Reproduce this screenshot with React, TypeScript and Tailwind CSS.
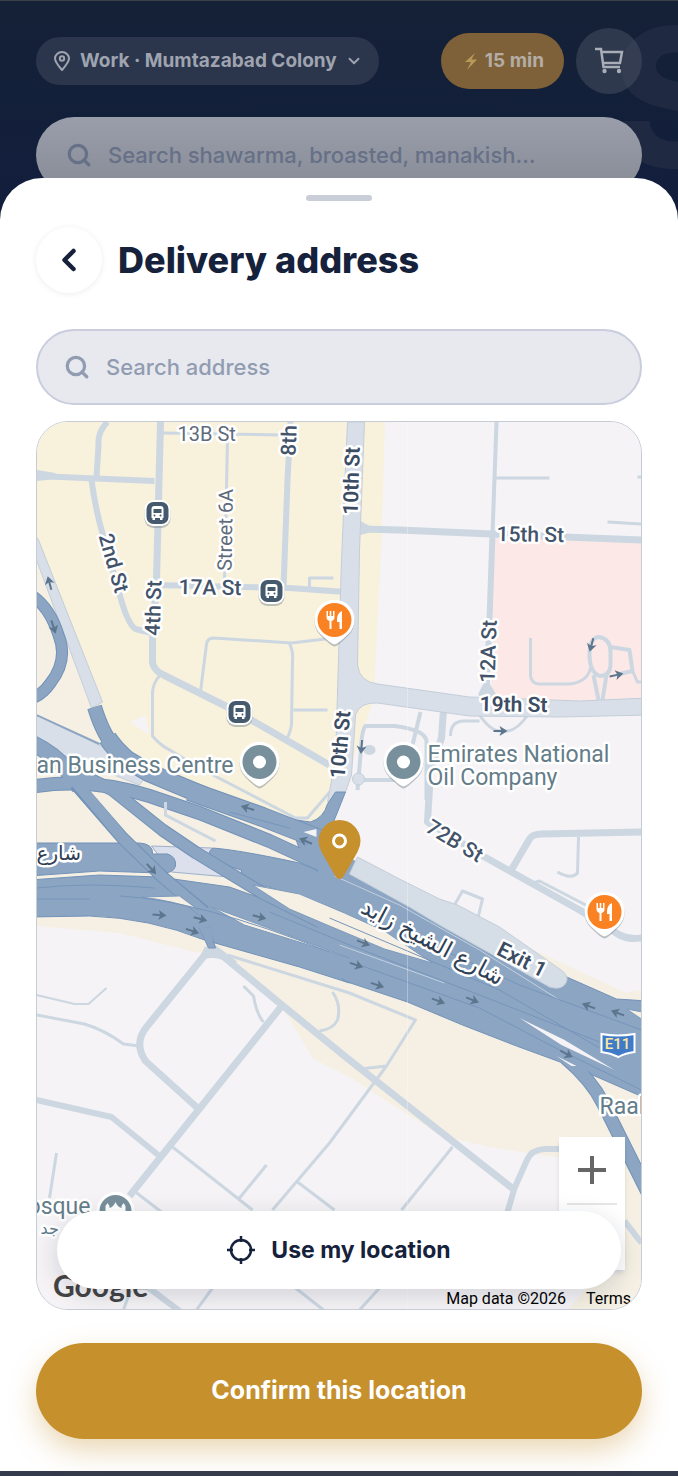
import { ChevronDown, ChevronLeft, Search } from "lucide-react";

const LOCAL_ROADS = [
  { w: 2, d: "M37 995 L75 1004 H89 L107 988" },
  { w: 3, d: "M163 433 L284 435 M228 440 L225 582 M310 590 V578 H334" },
  { w: 3, d: "M201 692 L207 644 Q208 638 214 638 L292 643 L334 638 M289 642 Q294 650 293 660 L292 725 Q290 736 286 740 M294 710 H328" },
  { w: 3, d: "M160 676 Q154 682 153 692 V736 Q160 745 172 751 L200 768 L296 818 H308 L332 790" },
  { w: 3, d: "M496 478 H550 M608 522 L642 524 M638 477 H642" },
  { w: 3, d: "M531 638 V676 Q532 683 539 684 H570 Q588 682 591 668 M633 671 L638 682 H642" },
  { w: 4, d: "M590 654 Q590 637 600 637 Q611 639 611 652 V666 Q610 676 600 676 Q590 672 590 654 M611 647 L630 650 L633 671 L620 674 M594 675 L599 700 M607 675 L603 700" },
  { w: 4, d: "M358 790 L361 755 Q362 730 366 726 L395 726 Q427 730 427 742 V800 M421 712 L413 745 M356 780 L400 780" },
  { w: 3, d: "M451 736 Q451 722 463 721 H480 M478 712 Q490 731 501 731 H508 Q518 730 529 714" },
  { w: 3, d: "M579 837 L578 873 Q572 880 558 872 M530 884 L540 881 L592 908 M455 905 L463 891 L483 899 L478 920" },
  { w: 3, d: "M37 1015 L85 1024 Q105 1030 124 1044 L140 1046 M57 1153 L50 1198" },
  { w: 3, d: "M173 1147 L253 1210 M240 1198 L267 1165 M136 1192 L162 1212 M298 1182 L335 1210" },
  { w: 3, d: "M228 955 L350 993 L416 1020 L387 1066 L361 1069 M387 1066 L330 1143 L273 1210" },
  { w: 3, d: "M333 992 Q342 1005 338 1020 Q334 1029 320 1031 M244 986 L254 996 Q257 1014 264 1022 M453 1147 L402 1210" },
  { w: 3, d: "M213 1288 L197 1310 M131 1290 L124 1310 M296 1288 L324 1310 M380 1288 L360 1310" },
  { w: 4, d: "M497 422 L493 534" },
  { w: 6, d: "M493 534 L490 620 L487 692 M487 684 L482 694 H493 Z" },
  { w: 6, d: "M108 422 Q98 432 99 445 L97 478 M37 476 L155 481 M291 422 L288 480 L284 588 M156 585 L290 588 L346 592" },
  { w: 6, d: "M92 480 Q96 510 104 537 L120 594 Q128 624 136 629 L152 633" },
  { w: 7, d: "M161 422 L157 580 L153 640 V663 Q155 671 164 675 L238 712 L330 765" },
  { w: 7, d: "M362 529 L400 530 L492 534 L642 540" },
  { w: 7, d: "M444 710 L442 738 L431 770 L428 822 L480 854 L512 872 L580 910 L620 935 Q630 940 642 938" },
  { w: 7, d: "M510 873 L530 839 Q533 834 542 834 L642 832" },
  { w: 7, d: "M207 953 L147 1027 Q134 1043 146 1061 L198 1108 M283 1005 L130 1196 M216 950 L280 1003 L350 1060 L515 1190" },
  { w: 6, d: "M37 1100 L112 1117 L160 1156 M508 1212 L515 1188 L528 1159 Q532 1150 545 1149 H562 M625 1221 L642 1243 M148 1287 L180 1311" },
];

const HIGHWAYS = [
  { w: 11, d: "M30 594 Q50 606 59 635 Q69 660 51 683 Q42 696 30 699" },
  { w: 14, d: "M95 707 Q104 736 116 748" },
  { w: 18, d: "M108 738 Q116 750 128 760 L150 773 L205 796" },
  { w: 16, d: "M30 742 Q60 756 72 777 L80 787" },
  { w: 19, d: "M190 791 L263 817 L330 843" },
  { w: 12, d: "M60 764 L113 790 L163 830 L197 853 L263 893 L347 935" },
  { w: 13, d: "M30 787 Q90 777 150 796 L200 813 L270 841 L350 878" },
  { w: 13, d: "M566 1058 Q592 1080 604 1104 L648 1192" },
];

const ARROWS = [
  [248, 808, 197],
  [306, 841, 203],
  [152, 869, 48],
  [160, 915, 5],
  [201, 919, 14],
  [193, 931, 18],
  [260, 917, 14],
  [364, 943, 22],
  [357, 965, 18],
  [378, 985, 18],
  [439, 1001, 20],
  [473, 1000, 22],
  [567, 1054, 28],
  [589, 1006, 200],
  [618, 1013, 200],
  [50, 583, 255],
  [54, 627, 72],
  [501, 731, 0],
  [617, 675, -12],
  [592, 645, 105],
  [362, 747, 95],
];

const STREETS = [
  { t: "15th St", x: 497, y: 541, r: 1 },
  { t: "17A St", x: 179, y: 594, r: 1 },
  { t: "2nd St", x: 99, y: 536, r: 74 },
  { t: "4th St", x: 160, y: 636, r: -88 },
  { t: "8th", x: 296, y: 456, r: -88 },
  { t: "12A St", x: 495, y: 683, r: -88 },
  { t: "72B St", x: 425, y: 831, r: 31 },
];

const MAJOR_STREETS = [
  { t: "10th St", x: 358, y: 515, r: -88 },
  { t: "10th St", x: 345, y: 779, r: -85 },
  { t: "19th St", x: 480, y: 711, r: 1 },
  { t: "Exit 1", x: 496, y: 954, r: 27 },
];

function Arrow({ x, y, r }: { x: number; y: number; r: number }) {
  return (
    <g transform={`translate(${x} ${y}) rotate(${r})`}>
      <path d="M-7 0 H3" stroke="#5d768e" strokeWidth="2" />
      <path d="M7 0 L-1 -5 L1 0 L-1 5 Z" fill="#5d768e" />
    </g>
  );
}

function PlacePin({ x, y, food = false }: { x: number; y: number; food?: boolean }) {
  return (
    <g transform={`translate(${x} ${y})`}>
      <path d="M0 26.500 Q-3 26.500 -14 15.500 A20 20 0 1 1 14 15.500 Q3 26.500 0 26.500 Z" fill="#7f8b93" opacity="0.5" />
      <path d="M0 24.500 Q-3 24.500 -14 14 A20 20 0 1 1 14 14 Q3 24.500 0 24.500 Z" fill="#fff" />
      <circle r="17" fill={food ? "#fb8222" : "#78909c"} />
      {food ? (
        <g fill="#fff">
          <path d="M-8 -9 V-3 Q-8 0 -5 1 V9 H-3 V1 Q0 0 0 -3 V-9 H-1.500 V-4 H-3.200 V-9 H-4.800 V-4 H-6.500 V-9 Z" />
          <path d="M7.500 -9 Q2.500 -7 2.500 0 V2 H5 V9 H7.500 Z" />
        </g>
      ) : (
        <circle r="6.500" fill="#fff" />
      )}
    </g>
  );
}

function BusStop({ x, y }: { x: number; y: number }) {
  return (
    <g transform={`translate(${x} ${y})`}>
      <rect x="-13" y="-11" width="26" height="26" rx="9" fill="#7f8b93" opacity="0.5" />
      <rect x="-13" y="-13" width="26" height="26" rx="9" fill="#fff" />
      <rect x="-11" y="-11" width="22" height="22" rx="7" fill="#455a6c" />
      <path d="M-6 -4 Q-6 -7 -3 -7 H3 Q6 -7 6 -4 V5 H5 V7 H2.500 V5 H-2.500 V7 H-5 V5 H-6 Z" fill="#fff" />
      <path d="M-4 -4 H4 V0 H-4 Z" fill="#455a6c" />
      <circle cx="-3" cy="2.600" r="1" fill="#455a6c" />
      <circle cx="3" cy="2.600" r="1" fill="#455a6c" />
    </g>
  );
}

function MapCanvas() {
  return (
    <svg
      className="absolute inset-0 w-full h-full"
      viewBox="37 422 605 887"
      preserveAspectRatio="xMidYMid slice"
      fill="none"
      role="img"
      aria-label="Map"
    >
      <rect x="-400" y="0" width="1500" height="1800" fill="#f5f3f5" />

      {/* ground areas */}
      <path d="M0 400 H386 L382 540 L374 700 L340 800 L320 850 L0 780 Z" fill="#f8f1dc" />
      <path d="M37 555 L92 705 L110 745 L180 780 L330 830 L360 880 L37 880 Z" fill="#f5f0e3" />
      <path d="M130 722 L146 715 L150 735 Z" fill="#f5f3f5" />
      <path d="M0 860 H340 L642 1000 V1320 H560 L585 1290 L625 1270 V1165 L540 1155 L490 1147 L440 1135 L350 1077 L314 1059 L282 1006 L225 955 L195 952 L120 933 L37 926 H0 Z" fill="#f5f0e3" />
      <path d="M608 996 L642 990 V1005 Z" fill="#f5f0e3" />
      <path d="M495 538 L642 543 V699 L580 702 L492 697 Z" fill="#fce8e6" />

      {/* local streets */}
      <g stroke="#ccd7e1" strokeLinejoin="round">
        {LOCAL_ROADS.map((road) => (
          <path key={road.d} d={road.d} strokeWidth={road.w} />
        ))}
      </g>
      <ellipse cx="370" cy="750" rx="6" ry="5" fill="#ccd7e1" />
      <circle cx="359" cy="779" r="6" fill="#d8dfe8" stroke="#c5cfda" />
      <path d="M37 470 L56 473 V479 L37 481 Z" fill="#ccd7e1" />
      <path d="M361 521 L372 527 V532 L361 535 Z" fill="#ccd7e1" />
      <path d="M198 962 L205 947 L216 945 L238 962 L228 962 Q212 954 198 962 Z" fill="#ccd7e1" />

      {/* arterial streets */}
      <path
        d="M348 422 H365 L360 550 L358 665 Q360 682 378 684 L470 697 L580 701 L648 698 V715 L560 717 L470 716 L378 703 Q360 702 356 715 L352 775 L346 792 L328 802 L336 760 L342 560 Z"
        fill="#d8dfe8"
        stroke="#c3ced9"
      />
      <path d="M27 520 L39 540 L103 702 L92 708 L37 560 Z" fill="#d8dfe8" stroke="#c3ced9" />
      <path d="M30 712 L110 750 L150 772 L140 785 L30 742 Z" fill="#d8dfe8" stroke="#c3ced9" />
      <path d="M37 715 L100 744" stroke="#8ba5c3" strokeWidth="2" />
      <path d="M152 846 L212 848 L244 868 L240 878 L172 872 Z" fill="#dcdfec" stroke="#9db1ca" />

      {/* motorway */}
      <g fill="#8ba5c3" stroke="#7392b8">
        <path d="M30 843 H140 Q154 844 153 854 H168 Q177 857 176 866 Q174 874 160 873 L100 871 L30 876 Z" />
        <path d="M213 848 Q240 850 300 863 L365 890 L385 935 L340 914 Q300 894 242 880 V870 L214 862 Q205 855 213 848 Z" />
        <path d="M30 880 L100 875 L160 877 L230 887 L300 912 L350 934 V983 L300 967 L205 940 Q150 918 90 916 L30 917 Z" />
        <path d="M290 819 L311 822 Q324 818 328 804 L336 792 H346 L330 832 L345 858 L400 884 L565 976 L617 999 L648 1001 V1099 L577 1068 L517 1046 L463 1025 L408 1002 L345 981 L330 960 L325 880 L300 850 Z" />
        <path d="M200 928 L209 948 H216 L210 928 Z" />
      </g>
      <g stroke="#7392b8" strokeLinejoin="round">
        {HIGHWAYS.map((road) => (
          <path key={road.d} d={road.d} strokeWidth={road.w + 1} />
        ))}
      </g>
      <g stroke="#8ba5c3" strokeLinejoin="round">
        {HIGHWAYS.map((road) => (
          <path key={road.d} d={road.d} strokeWidth={road.w - 1} />
        ))}
      </g>
      <path d="M76 784 L123 838 L163 877 L205 912" stroke="#7392b8" strokeWidth="13" />
      <path d="M72 777 L123 838 L163 877 L210 917" stroke="#8ba5c3" strokeWidth="11" />
      <path d="M322 838 L338 850 L400 888 L420 950 L320 912 L318 868 L300 848 Z M318 922 L360 934 V984 L318 970 Z M550 1040 L600 1060 V1076 L576 1066 Z" fill="#8ba5c3" />
      <path d="M199 926 L206 941 L214 942 L211 928 Z" fill="#8ba5c3" />
      <path d="M304 832 L317 829 V837 Z" fill="#f5f3f5" />
      <g fill="#f5f0e3" stroke="#7f9bbe">
        <path d="M253 885 L300 894 L345 913 L385 931 L433 963 L385 949 L330 926 L290 909 Z" />
        <path d="M142 897 L180 896 L199 910 Q175 901 142 897 Z" />
        <path d="M212 907 L250 921 L350 958 L290 939 L245 925 Z" />
        <path d="M627 1009 L648 1013 V1023 Z" />
      </g>
      <path d="M520 1018 L565 1040 L615 1070 L562 1045 Z M557 1056 L577 1066 L572 1066 Z" fill="#f5f3f5" />
      <path d="M335 876 L400 905 L480 950 L560 1000 M340 945 L445 983" stroke="#c3d0df" />
      <path
        d="M37 888 Q90 882 155 888 M37 899 H90 M120 896 Q200 900 330 952 M270 912 L350 945 L480 995 L600 1042 M400 930 L520 985 L642 1030 M360 965 L480 1008 L560 1050 L642 1090 M330 918 L500 990 L600 1048 M230 812 L290 828"
        stroke="#7795bb"
      />
      {/* side street that runs over the slip road */}
      <path d="M166 802 V815 L216 841" stroke="#ccd7e1" strokeWidth="3" />

      {/* exit lane */}
      <path d="M358 857 L400 879 L440 899 L458 905 L500 927 L563 971 Q571 978 565 985 Q560 990 550 987 L490 953 L440 925 L410 907 L350 874 Z" fill="#d5dee6" stroke="#c3ced9" />
      <path d="M408 422 V1310" stroke="#fff" strokeOpacity="0.3" />

      {ARROWS.map(([x, y, r]) => (
        <Arrow key={`${x}-${y}`} x={x} y={y} r={r} />
      ))}

      {/* labels */}
      <g
        fontFamily="Roboto, sans-serif"
        stroke="#fff"
        strokeWidth="5"
        strokeLinejoin="round"
        paintOrder="stroke"
      >
        <g fontSize="20" fill="#5f6b7a">
          <text x="178" y="441">13B St</text>
          <text transform="translate(232 571) rotate(-89)">Street 6A</text>
        </g>
        <g fontSize="21" fontWeight="500" fill="#43546a">
          {STREETS.map((s) => (
            <text key={s.t} transform={`translate(${s.x} ${s.y}) rotate(${s.r})`}>{s.t}</text>
          ))}
        </g>
        <g fontSize="21" fontWeight="600" fill="#3b4c63">
          {MAJOR_STREETS.map((s) => (
            <text key={s.y} transform={`translate(${s.x} ${s.y}) rotate(${s.r})`}>{s.t}</text>
          ))}
        </g>
        <g fontSize="23" fill="#647d89">
          <text x="428" y="762">Emirates National</text>
          <text x="428" y="785">Oil Company</text>
          <text x="234" y="773" textAnchor="end">an Business Centre</text>
          <text x="600" y="1114">Raal</text>
          <text x="91" y="1214" textAnchor="end">osque</text>
        </g>
        <g fontFamily="'DejaVu Sans', sans-serif" fill="#2f3f55">
          <text x="37" y="860" fontSize="20">شارع</text>
          <text transform="translate(360 912) rotate(28)" fontSize="23">شارع الشيخ زايد</text>
          <text x="41" y="1234" fontSize="16" fill="#5f7c8a">جد</text>
        </g>
      </g>

      <BusStop x={158} y={513} />
      <BusStop x={272} y={591} />
      <BusStop x={240} y={712} />
      <PlacePin x={335} y={620} food />
      <PlacePin x={605} y={912} food />
      <PlacePin x={260} y={762} />
      <PlacePin x={404} y={762} />

      <circle cx="116" cy="1211" r="19" fill="#fff" />
      <circle cx="116" cy="1211" r="16" fill="#78909c" />
      <path d="M106 1214 V1206 L108 1203 L110 1206 V1208 Q114 1207 116 1202 Q118 1207 122 1208 V1206 L124 1203 L126 1206 V1214 Z" fill="#fff" />

      <path d="M602 1034 Q618 1037 635 1034 V1052 Q626 1053 619 1057 Q611 1053 602 1052 Z" fill="#3f7bc9" stroke="#fff" strokeWidth="2" />
      <text x="618" y="1049" textAnchor="middle" fontFamily="Roboto, sans-serif" fontSize="15" fontWeight="500" fill="#ffe9a0">E11</text>

      {/* selected spot */}
      <path d="M340 879 Q337 879 334 873 L322 852 Q319 846 319 841 A21 21 0 0 1 361 841 Q361 846 358 852 L346 873 Q343 879 340 879 Z" fill="#c6902d" />
      <circle cx="340" cy="841" r="6" stroke="#fff" strokeWidth="3" />
    </svg>
  );
}

function TopBar() {
  return (
    <header className="relative overflow-hidden border-t border-[#3b4049] bg-gradient-to-b from-[#142136] to-[#121e3c] px-9 pt-[27px]">
      <span
        aria-hidden="true"
        className="absolute top-0 right-[-60px] text-[192px] leading-[192px] font-extrabold text-[#1f2941]"
      >
        S
      </span>
      <div className="relative flex items-center gap-3">
        <button type="button" className="flex h-12 items-center gap-2 rounded-full bg-[#2b364c] px-4 text-[#9fa4b0]">
          <svg width="20" height="20" viewBox="0 0 20 20" fill="none" stroke="currentColor" strokeWidth="2">
            <path d="M10 19 Q3 11 3 7.500 A7 6.500 0 0 1 17 7.500 Q17 11 10 19 Z" />
            <circle cx="10" cy="7.500" r="2.200" />
          </svg>
          <span className="text-[19px] font-bold">Work · Mumtazabad Colony</span>
          <ChevronDown size={18} strokeWidth={2.500} />
        </button>
        <span className="ml-auto flex h-14 items-center gap-1 rounded-full bg-[#7e6138] px-5 text-[19px] font-bold text-[#b3ada6]">
          <svg width="20" height="20" viewBox="0 0 20 20" fill="#b79a58">
            <path d="M14 2 L4 11 H10 L6 19 L16 8.500 H10.500 Z" />
          </svg>
          15 min
        </span>
        <button type="button" aria-label="Cart" className="flex size-[66px] items-center justify-center rounded-full bg-[#4a5264]/50 text-[#a8adb7]">
          <svg width="30" height="30" viewBox="0 0 30 30" fill="none" stroke="currentColor" strokeWidth="2.500">
            <path d="M1 3 H7 L9.500 21 H26 M7.500 6 H28 L26 17 H9" />
            <circle cx="25" cy="25" r="2.200" fill="currentColor" stroke="none" />
            <circle cx="10.500" cy="25" r="2.200" fill="currentColor" stroke="none" />
          </svg>
        </button>
      </div>
      <label className="relative mt-[23px] flex h-[76px] items-center gap-4 rounded-full bg-gradient-to-b from-[#9a9eaa] to-[#878b96] px-[30px] text-[#667087]">
        <Search size={26} strokeWidth={3} aria-hidden="true" />
        <input
          aria-label="Search menu"
          placeholder="Search shawarma, broasted, manakish…"
          className="min-w-0 flex-1 bg-transparent text-[22px] font-medium outline-none placeholder:text-[#667087]"
        />
      </label>
    </header>
  );
}

function AddressMap() {
  return (
    <div className="relative mt-4 min-h-[480px] flex-1 overflow-hidden rounded-[32px] border border-[#c6ccd6] bg-[#f5f3f5]">
      <MapCanvas />

      <div className="absolute right-4 bottom-[39px] flex w-[66px] flex-col bg-white px-2 shadow-md">
        <button type="button" aria-label="Zoom in" className="flex h-[66px] items-center justify-center">
          <svg width="28" height="28" viewBox="0 0 28 28" stroke="#666" strokeWidth="4">
            <path d="M0 14 H28 M14 0 V28" />
          </svg>
        </button>
        <button type="button" aria-label="Zoom out" className="h-[67px] border-t-2 border-[#e6e6e6]" />
      </div>

      <div className="absolute inset-x-0 bottom-0 flex items-end justify-between pl-4 text-black">
        <a href="#google" className="pb-1 font-[Lato] text-[30px] leading-[40px] font-bold text-[#444]">
          Google
        </a>
        <p className="flex gap-5 pr-2.5 font-[Roboto] text-base leading-5">
          <span>Map data ©2026</span>
          <a href="#terms">Terms</a>
        </p>
      </div>

      <button
        type="button"
        className="absolute inset-x-5 bottom-5 flex h-[78px] items-center justify-center gap-4 rounded-full bg-white text-[23px] font-bold text-[#16213b] shadow-[0_6px_24px_rgba(20,30,60,0.16)]"
      >
        <svg width="28" height="28" viewBox="0 0 28 28" fill="none" stroke="currentColor" strokeWidth="2.500">
          <circle cx="14" cy="14" r="10" />
          <path d="M14 0 V6 M14 22 V28 M0 14 H6 M22 14 H28" />
        </svg>
        Use my location
      </button>
    </div>
  );
}

export default function App() {
  return (
    <div className="flex min-h-screen flex-col bg-[#121e3c] font-[Inter,sans-serif]">
      <TopBar />
      <main className="relative -mt-[15px] flex flex-1 flex-col rounded-t-[42px] bg-white px-9 pt-[17px] pb-8">
        <div className="mx-auto h-1.5 w-[66px] rounded-full bg-[#c9ced8]" />
        <div className="mt-[26px] flex items-center gap-4">
          <button
            type="button"
            aria-label="Back"
            className="flex size-[66px] items-center justify-center rounded-full bg-white text-[#16213b] shadow-[0_1px_6px_rgba(20,30,60,0.08)]"
          >
            <ChevronLeft size={36} strokeWidth={3} />
          </button>
          <h1 className="text-4xl font-extrabold text-[#16213b]">Delivery address</h1>
        </div>
        <label className="mt-9 flex h-[76px] items-center gap-4 rounded-full border-2 border-[#c9cddd] bg-[#e7e9ef] px-[26px] text-[#929cb1]">
          <Search size={26} strokeWidth={3} aria-hidden="true" />
          <input
            aria-label="Search address"
            placeholder="Search address"
            className="min-w-0 flex-1 bg-transparent text-[22px] font-medium outline-none placeholder:text-[#929cb1]"
          />
        </label>
        <AddressMap />
        <button
          type="button"
          className="mt-[33px] h-24 rounded-full bg-[#c6902d] text-[25px] font-bold text-white shadow-[0_12px_28px_rgba(198,144,45,0.35)]"
        >
          Confirm this location
        </button>
      </main>
      <div className="h-[5px] bg-[#343b4c]" />
    </div>
  );
}
